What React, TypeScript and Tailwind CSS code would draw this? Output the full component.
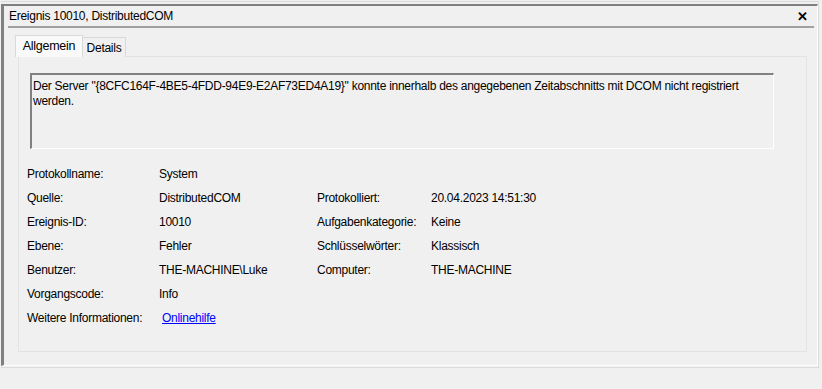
import React from "react";

const rows: [string, React.ReactNode, string?, string?][] = [
  ["Protokollname:", "System"],
  ["Quelle:", "DistributedCOM", "Protokolliert:", "20.04.2023 14:51:30"],
  ["Ereignis-ID:", "10010", "Aufgabenkategorie:", "Keine"],
  ["Ebene:", "Fehler", "Schlüsselwörter:", "Klassisch"],
  ["Benutzer:", "THE-MACHINE\\Luke", "Computer:", "THE-MACHINE"],
  ["Vorgangscode:", "Info"],
];

export default function App() {
  return (
    <div
      className="w-[822px] h-[389px] bg-[#f0f0f0] text-[12px] tracking-[-0.27px] text-black overflow-hidden"
      style={{ fontFamily: '"Segoe UI", "Liberation Sans", Arial, sans-serif' }}
    >
      {/* Outer window frame */}
      <div className="ml-px mt-px w-[818px] h-[367px] border-t border-r border-b border-[#dcdcdc]">
        <div className="mt-[2px] h-[362px] border-t-2 border-l-[3px] border-[#808080] border-r border-b border-r-white border-b-white">
          {/* Title */}
          <div className="ml-[4px] mr-[3px] h-[22px] flex items-center justify-between border-b-2 border-[#a0a0a0]">
            <span className="pl-px">Ereignis 10010, DistributedCOM</span>
            <span className="mr-[6px] text-[13px] font-bold leading-none">✕</span>
          </div>

          {/* Tabs */}
          <div className="ml-[11px] mt-[7px] flex items-end h-[22px]">
            <div className="w-[68px] h-[22px] bg-[#f9f9f9] border border-b-0 border-[#d9d9d9] flex items-center justify-center text-[12.5px] relative z-10">
              Allgemein
            </div>
            <div className="w-[43px] h-[20px] bg-[#f0f0f0] border border-l-0 border-b-0 border-[#d9d9d9] flex items-center justify-center">
              Details
            </div>
          </div>

          {/* Tab panel */}
          <div className="ml-[14px] w-[789px] h-[296px] -mt-px border border-[#e3e3e3] bg-[#f0f0f0]">
            <div className="ml-[11px] mt-[16px] w-[744px] h-[76px] border-t-2 border-l-2 border-[#808080] border-r border-b border-r-white border-b-white pl-[1px] pt-[4px] leading-[15px]">
              Der Server "{"{"}8CFC164F-4BE5-4FDD-94E9-E2AF73ED4A19{"}"}" konnte innerhalb des angegebenen Zeitabschnitts mit DCOM nicht registriert
              <br />
              werden.
            </div>

            <div className="mt-[13px] ml-[8px]">
              {rows.map(([l1, v1, l2, v2]) => (
                <div key={l1} className="flex h-[24px] items-center">
                  <span className="w-[132px]">{l1}</span>
                  <span className="w-[158px]">{v1}</span>
                  <span className="w-[114px]">{l2}</span>
                  <span>{v2}</span>
                </div>
              ))}
              <div className="flex h-[24px] items-center">
                <span className="w-[135px]">Weitere Informationen:</span>
                <span className="text-[#0000ff] underline">Onlinehilfe</span>
              </div>
            </div>
          </div>
        </div>
      </div>
    </div>
  );
}
